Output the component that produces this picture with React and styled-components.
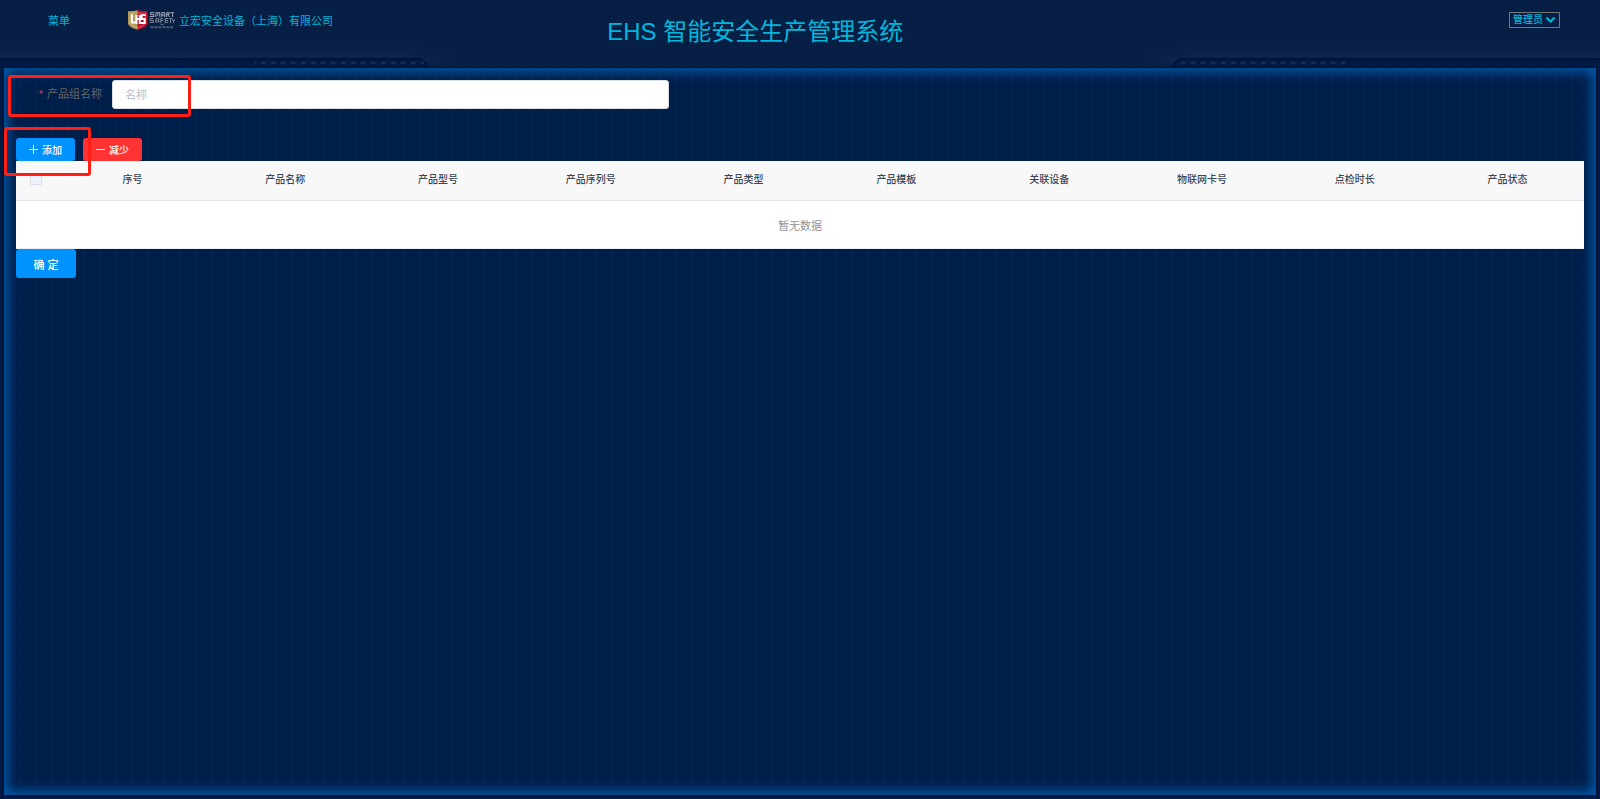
import React, { useState } from "react";
import styled, { createGlobalStyle } from "styled-components";

const GlobalStyle = createGlobalStyle`
  * {
    box-sizing: border-box;
  }

  body {
    margin: 0;
    background: #001a43;
    font-family: "Liberation Sans", "Noto Sans CJK SC", sans-serif;
    font-size: 11px;
  }

  button,
  input,
  select {
    font-family: inherit;
  }
`;

const Page = styled.div`
  min-height: 100vh;
  display: flex;
  flex-direction: column;
  padding-bottom: 4px;
`;

const Header = styled.header`
  position: relative;
  display: grid;
  grid-template-columns: 27.2% 40% 1fr;
  height: 64px;
  margin-bottom: 4px;
  color: #00b7db;
`;

const HeaderArt = styled.svg`
  position: absolute;
  inset: 0;
  z-index: -1;
  width: 100%;
  height: 68px;
`;

const Brand = styled.div`
  display: flex;
  align-items: center;
  height: 40px;
  padding-left: 48px;
`;

const MenuLink = styled.a`
  width: 80px;
  color: inherit;
  text-decoration: none;
`;

const Company = styled.span`
  margin-left: 4px;
  white-space: nowrap;
`;

const Title = styled.h1`
  margin: 0;
  font-size: 24px;
  font-weight: 400;
  line-height: 64px;
  text-align: center;
  white-space: nowrap;
`;

const UserBox = styled.div`
  display: flex;
  justify-content: flex-end;
  align-items: center;
  height: 40px;
  padding-right: 40px;
`;

const SelectWrap = styled.label`
  position: relative;
  display: flex;
`;

const UserSelect = styled.select`
  appearance: none;
  width: 51px;
  height: 16px;
  padding: 0 0 0 3px;
  border: 1px solid #767676;
  border-radius: 0;
  background: transparent;
  color: inherit;
  font-size: 10px;
  font-weight: 500;
  line-height: 14px;
`;

const Arrow = styled.svg`
  position: absolute;
  top: 5px;
  right: 5px;
  pointer-events: none;
`;

const Panel = styled.main`
  position: relative;
  flex: 1;
  margin: 0 4px;
  padding: 12px;
  background: #001e4a;
  box-shadow: 0 0 0 1px #000f35;
`;

const GridArt = styled.svg`
  position: absolute;
  inset: 0;
  width: 100%;
  height: 100%;
`;

const Glow = styled.div`
  position: absolute;
  inset: 0;
  box-shadow: inset 0 0 12px 4px #0058a6;
`;

const Content = styled.form`
  position: relative;
`;

const Field = styled.div`
  display: flex;
  width: 41.67%;
  margin-bottom: 29px;
`;

const FieldLabel = styled.label`
  width: 96px;
  padding-right: 10px;
  color: #666666;
  line-height: 29px;
  text-align: right;

  &::before {
    content: "*";
    margin-right: 4px;
    color: #ff1f3d;
  }
`;

const TextInput = styled.input`
  flex: 1;
  min-width: 0;
  height: 29px;
  padding: 0 12px;
  border: 1px solid #dcdfe6;
  border-radius: 3px;
  background: #fff;
  color: #606266;
  font-size: 11px;

  &::placeholder {
    color: #b8bcc6;
  }
`;

const Toolbar = styled.div`
  display: flex;
  gap: 8px;
`;

const Button = styled.button`
  display: flex;
  align-items: center;
  justify-content: center;
  gap: 4px;
  width: ${({ $large }) => ($large ? "60px" : "59px")};
  height: ${({ $large }) => ($large ? "29px" : "23px")};
  padding: 0;
  border: none;
  border-radius: 3px;
  background: ${({ $danger }) => ($danger ? "#ff3333" : "#0092ff")};
  color: #fff;
  font-size: ${({ $large }) => ($large ? "11px" : "10px")};
  font-weight: 500;
  cursor: pointer;
`;

const Table = styled.table`
  width: 100%;
  table-layout: fixed;
  border-collapse: separate;
  border-spacing: 0;
  background: #fff;
`;

const HeadCell = styled.th`
  width: ${({ $width }) => $width || "auto"};
  height: 40px;
  padding: 0 0 4px;
  border-bottom: 1px solid #dde3ea;
  background: #f8f8f8;
  color: #3a4654;
  font-size: 10px;
  font-weight: 500;
`;

const CheckBox = styled.input`
  appearance: none;
  display: block;
  width: 12px;
  height: 12px;
  margin: 0 auto;
  border: 1px solid #dcdfe6;
  border-radius: 1px;
  background: #edf2fc;
`;

const EmptyCell = styled.td`
  height: 48px;
  padding: 0;
  border-bottom: 1px solid #ebeef5;
  color: #909399;
  font-size: 11px;
  text-align: center;
`;

const Mark = styled.div`
  position: absolute;
  top: ${({ $top }) => $top}px;
  left: ${({ $left }) => $left}px;
  width: ${({ $width }) => $width}px;
  height: ${({ $height }) => $height}px;
  border: 3px solid #ff1f14;
  border-radius: 3px;
  pointer-events: none;
`;

const columns = [
  "序号",
  "产品名称",
  "产品型号",
  "产品序列号",
  "产品类型",
  "产品模板",
  "关联设备",
  "物联网卡号",
  "点检时长",
  "产品状态",
];

const Logo = () => (
  <svg width="47" height="20" viewBox="0 0 48 20" aria-hidden="true">
    <path d="M0 1Q6 1 10 0V20Q2 18 0 14Z" fill="#b39a5b" />
    <path d="M10 0Q14 1 20 1V14Q18 18 10 20Z" fill="#c00f2b" />
    <path d="M2 3H18V13Q16 16 10 18Q4 16 2 13Z" fill="none" stroke="#e3cfa4" opacity="0.4" />
    <path
      d="M4 4V12.500H8M8.500 5V14M8.500 9H12M12 5V14M18 5H14V9H17V13H13"
      fill="none"
      stroke="#fff"
      strokeWidth="2"
    />
    <g fill="none" stroke="#c9ced9">
      <path
        d="M27 2.500H23V4.500H26.500V6.500H22M28.500 7V2.500H32.500V7M30.500 3V6M34.500 7V2.500H37.500V7M34.500 5H37.500M39.500 7V2.500H42V4.500H39.500M41 5L42.500 7M43 2.500H47M45.500 3V7"
        opacity="0.8"
      />
      <path
        d="M26 8.500H22.500V10.500H26V12.500H22M28.500 13V8.500H31.500V13M28.500 11H31.500M36 8.500H33.500V13M33.500 10.500H36M41 8.500H38V12.500H41M38 10.500H41M42 8.500H45M43.500 9V13M45 9L46.500 11L48 9M46.500 11V13"
        opacity="0.6"
      />
      <path d="M33 14L34.500 15L37 14" opacity="0.5" />
      <path d="M23 17.500H46" strokeWidth="2" strokeDasharray="3 1" opacity="0.35" />
    </g>
  </svg>
);

const HeaderBackground = () => (
  <HeaderArt viewBox="0 0 1600 68" preserveAspectRatio="none" aria-hidden="true">
    <defs>
      <linearGradient id="edge" x1="0" y1="0" x2="0" y2="1">
        <stop offset="0" stopColor="#10274f" stopOpacity="0" />
        <stop offset="1" stopColor="#10274f" />
      </linearGradient>
      <linearGradient id="fade">
        <stop offset="0" stopColor="#fff" />
        <stop offset="0.25" stopColor="#fff" />
        <stop offset="0.29" stopColor="#000" />
        <stop offset="0.71" stopColor="#000" />
        <stop offset="0.75" stopColor="#fff" />
        <stop offset="1" stopColor="#fff" />
      </linearGradient>
      <mask id="sides">
        <rect width="1600" height="68" fill="url(#fade)" />
      </mask>
      <pattern id="slash" width="10" height="4" y="61" patternUnits="userSpaceOnUse">
        <path d="M2 0.500H7L5 3H0Z" fill="#122c55" />
      </pattern>
    </defs>
    <path d="M0 0H1600V58H1180L1173 64V68H428V64L421 58H0Z" fill="#071f45" />
    <path d="M0 44H1600V58H1180L1173 64H428L421 58H0Z" fill="url(#edge)" mask="url(#sides)" />
    <path d="M0 59H421L428 65M1600 59H1180L1173 65" fill="none" stroke="#00143a" strokeWidth="2" />
    <path d="M254 61H424V65H254ZM1178 61H1348V65H1178Z" fill="url(#slash)" />
  </HeaderArt>
);

const GridBackground = () => (
  <GridArt aria-hidden="true">
    <defs>
      <pattern id="grid" x="0" y="14" width="16" height="16" patternUnits="userSpaceOnUse">
        <path d="M0 0.500H16" stroke="#06244f" strokeDasharray="3 2" />
        <path d="M0.500 0V16" stroke="#082854" strokeDasharray="5 3" />
      </pattern>
    </defs>
    <rect width="100%" height="100%" fill="url(#grid)" />
  </GridArt>
);

const PlusIcon = () => (
  <svg width="9" height="9" viewBox="0 0 9 9" aria-hidden="true">
    <path d="M0 4.500H9M4.500 0V9" stroke="#fff" />
  </svg>
);

const MinusIcon = () => (
  <svg width="9" height="9" viewBox="0 0 9 9" aria-hidden="true">
    <path d="M0 4.500H9" stroke="#fff" />
  </svg>
);

const App = () => {
  const [name, setName] = useState("");

  return (
    <Page>
      <GlobalStyle />
      <Header>
        <HeaderBackground />
        <Brand>
          <MenuLink href="#menu">菜单</MenuLink>
          <Logo />
          <Company>立宏安全设备（上海）有限公司</Company>
        </Brand>
        <Title>EHS 智能安全生产管理系统</Title>
        <UserBox>
          <SelectWrap>
            <UserSelect aria-label="管理员">
              <option>管理员</option>
            </UserSelect>
            <Arrow width="9" height="6" viewBox="0 0 9 6" aria-hidden="true">
              <path d="M0.500 0.500L4.500 4.500L8.500 0.500" fill="none" stroke="#00b7db" strokeWidth="2" />
            </Arrow>
          </SelectWrap>
        </UserBox>
      </Header>
      <Panel>
        <GridBackground />
        <Glow />
        <Content onSubmit={(e) => e.preventDefault()}>
          <Field>
            <FieldLabel htmlFor="name">产品组名称</FieldLabel>
            <TextInput
              id="name"
              placeholder="名称"
              value={name}
              onChange={(e) => setName(e.target.value)}
            />
          </Field>
          <Toolbar>
            <Button type="button">
              <PlusIcon />
              添加
            </Button>
            <Button type="button" $danger>
              <MinusIcon />
              减少
            </Button>
          </Toolbar>
          <Table>
            <thead>
              <tr>
                <HeadCell $width="40px">
                  <CheckBox type="checkbox" aria-label="全选" disabled />
                </HeadCell>
                {columns.map((column) => (
                  <HeadCell key={column}>{column}</HeadCell>
                ))}
              </tr>
            </thead>
            <tbody>
              <tr>
                <EmptyCell colSpan={columns.length + 1}>暂无数据</EmptyCell>
              </tr>
            </tbody>
          </Table>
          <Button type="submit" $large>
            确 定
          </Button>
        </Content>
        <Mark $top={7} $left={4} $width={183} $height={42} />
        <Mark $top={59} $left={0} $width={87} $height={49} />
      </Panel>
    </Page>
  );
};

export default App;
